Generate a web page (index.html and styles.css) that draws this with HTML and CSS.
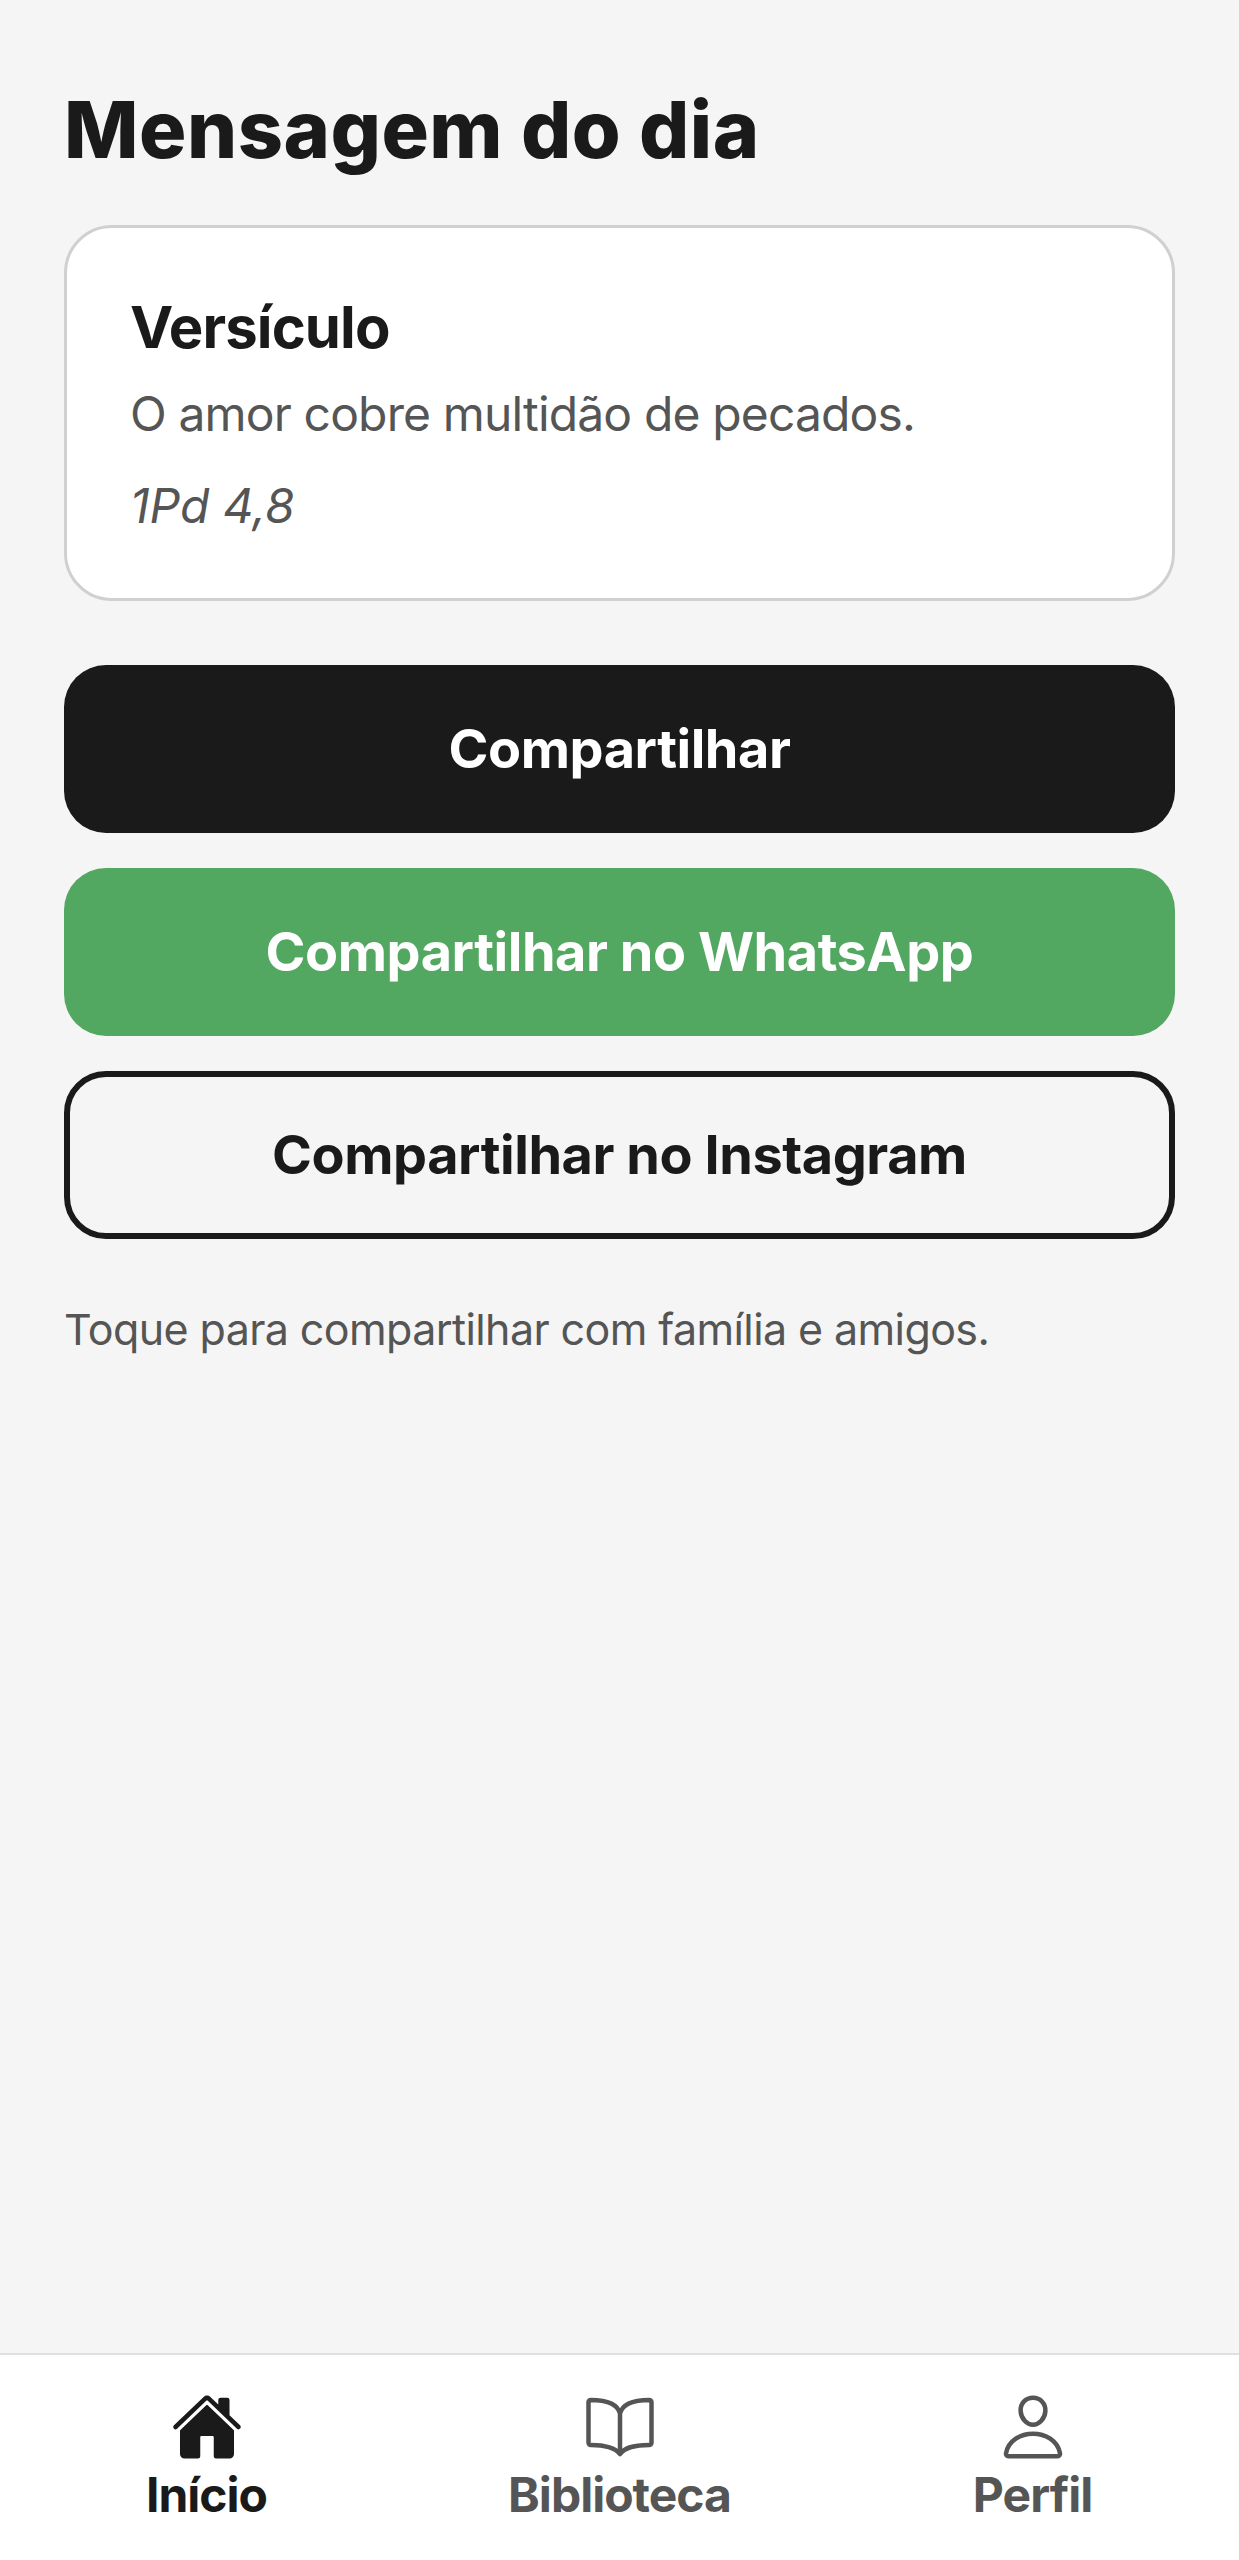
FILE: index.html
```html
<!DOCTYPE html>
<html lang="pt-BR">
<head>
  <meta charset="UTF-8">
  <meta name="viewport" content="width=device-width, initial-scale=1.0">
  <title>Mensagem do dia</title>
  <link rel="stylesheet" href="styles.css">
</head>
<body>
  <main class="content">
    <h1>Mensagem do dia</h1>

    <section class="card">
      <h2>Versículo</h2>
      <p class="verse">O amor cobre multidão de pecados.</p>
      <p class="reference">1Pd 4,8</p>
    </section>

    <div class="button-group">
      <button class="btn btn-dark">Compartilhar</button>
      <button class="btn btn-green">Compartilhar no WhatsApp</button>
      <button class="btn btn-outline">Compartilhar no Instagram</button>
    </div>

    <p class="hint">Toque para compartilhar com família e amigos.</p>
  </main>

  <nav class="tabbar">
    <a class="tab active">
      <svg class="tab-icon" viewBox="0 0 512 512" fill="currentColor">
        <path d="M261.56 101.28a8 8 0 00-11.06 0L66.4 277.15a8 8 0 00-2.47 5.79L63.9 448a32 32 0 0032 32H192a16 16 0 0016-16V328a8 8 0 018-8h80a8 8 0 018 8v136a16 16 0 0016 16h96.06a32 32 0 0032-32V282.94a8 8 0 00-2.47-5.79z"/>
        <path d="M490.91 244.15l-74.8-71.56V64a16 16 0 00-16-16h-48a16 16 0 00-16 16v32l-57.92-55.38C272.77 35.14 264.71 32 256 32c-8.68 0-16.72 3.14-22.14 8.63l-212.7 203.5c-6.22 6-7 15.87-1.34 22.37A16 16 0 0043 267.56L250.5 69.28a8 8 0 0111.06 0l207.52 198.28a16 16 0 0022.59-.44c6.14-6.36 5.63-16.86-.76-22.97z"/>
      </svg>
      <span>Início</span>
    </a>
    <a class="tab">
      <svg class="tab-icon" viewBox="0 0 512 512" fill="none" stroke="currentColor" stroke-width="32" stroke-linecap="round" stroke-linejoin="round">
        <path d="M256 160c16-63.16 76.43-95.41 208-96a15.94 15.94 0 0116 16v288a16 16 0 01-16 16c-128 0-177.45 25.81-208 64-30.37-38-80-64-208-64-9.88 0-16-8.05-16-17.93V80a15.94 15.94 0 0116-16c131.57.59 192 32.84 208 96zM256 160v288"/>
      </svg>
      <span>Biblioteca</span>
    </a>
    <a class="tab">
      <svg class="tab-icon" viewBox="0 0 512 512" fill="none" stroke="currentColor" stroke-width="32" stroke-linecap="round" stroke-linejoin="round">
        <path d="M344 144c-3.92 52.87-44 96-88 96s-84.15-43.12-88-96c-4-55 35-96 88-96s92 42 88 96z"/>
        <path d="M256 304c-87 0-175.3 48-191.64 138.6C62.39 453.52 68.57 464 80 464h352c11.44 0 17.62-10.48 15.65-21.4C431.3 352 343 304 256 304z"/>
      </svg>
      <span>Perfil</span>
    </a>
  </nav>
</body>
</html>
```

FILE: styles.css
```css
* {
  box-sizing: border-box;
}

body {
  font-family: 'Inter', 'Liberation Sans', sans-serif;
  background-color: #f5f5f5;
  color: #1a1a1a;
  display: flex;
  flex-direction: column;
  height: 2560px;
  margin: 0;
}

.content {
  flex: 1;
  padding: 84px 64px 0;
}

h1 {
  font-size: 79px;
  font-weight: 800;
  letter-spacing: 0.5px;
  line-height: 90px;
  margin: 0 0 51px;
}

.card {
  background-color: #fff;
  border: 3px solid #d0d0d0;
  border-radius: 48px;
  height: 376px;
  padding: 63px 63px 0;
}

.card h2 {
  font-size: 58px;
  font-weight: 700;
  letter-spacing: -0.9px;
  line-height: 72px;
  margin: 0 0 18px;
}

.verse {
  font-size: 48px;
  letter-spacing: -0.85px;
  line-height: 66px;
  color: #555;
  margin: 0 0 26px;
}

.reference {
  font-size: 48px;
  line-height: 66px;
  font-style: italic;
  color: #555;
  margin: 0;
}

.button-group {
  display: flex;
  flex-direction: column;
  gap: 35px;
  margin-top: 64px;
}

.btn {
  font-family: inherit;
  font-size: 54px;
  font-weight: 700;
  letter-spacing: -0.45px;
  height: 168px;
  border: none;
  border-radius: 42px;
  padding: 0 0 2px;
}

.btn-dark {
  background-color: #1a1a1a;
  color: #fff;
}

.btn-green {
  background-color: #53a861;
  color: #fff;
}

.btn-outline {
  background-color: transparent;
  border: 6px solid #1a1a1a;
  color: #1a1a1a;
}

.hint {
  font-size: 43px;
  letter-spacing: -0.6px;
  line-height: 60px;
  color: #555;
  margin: 60px 0 0;
}

.tabbar {
  display: grid;
  grid-template-columns: repeat(3, 1fr);
  height: 207px;
  padding-top: 36px;
  background-color: #fff;
  border-top: 2px solid #e0e0e0;
}

.tab {
  display: flex;
  flex-direction: column;
  align-items: center;
  gap: 3px;
  color: #555;
  font-size: 48px;
  font-weight: 700;
  letter-spacing: -1px;
  line-height: 58px;
}

.tab.active {
  color: #1a1a1a;
}

.tab-icon {
  display: block;
  width: 72px;
  height: 72px;
}
```
